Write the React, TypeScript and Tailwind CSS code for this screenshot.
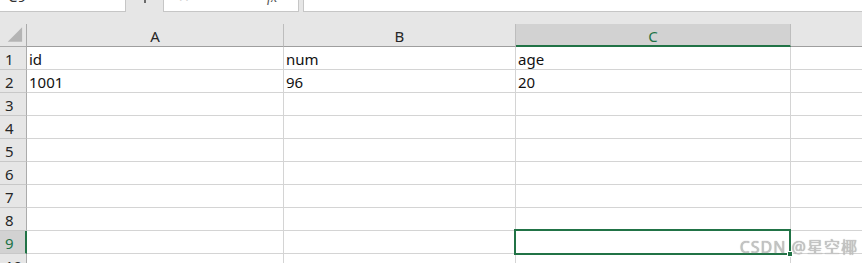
import React from "react";

const cols = [
  { key: "A", w: "w-[257px]" },
  { key: "B", w: "w-[232px]" },
  { key: "C", w: "w-[275px]" },
];

const data: Record<number, string[]> = {
  1: ["id", "num", "age"],
  2: ["1001", "96", "20"],
};

export default function App() {
  const rows = [1, 2, 3, 4, 5, 6, 7, 8, 9, 10];

  return (
    <div className="relative w-[862px] h-[263px] overflow-hidden bg-white font-['Noto_Sans',sans-serif] text-[#1a1a1a]">
      {/* Formula bar (scrolled, only its bottom edge shows) */}
      <div className="flex h-[12px] bg-[#e6e6e6]">
        <div className="w-[126px] h-[12px] overflow-hidden bg-white border-b border-r border-[#c6c6c6] pl-[8px]">
          <div className="-mt-[11px] text-[15px] leading-[15px] text-[#333]">C9</div>
        </div>
        <div className="w-[37px] flex justify-center">
          <div className="w-[2px] h-[3px] bg-[#6b6b6b]" />
        </div>
        <div className="w-[136px] h-[12px] overflow-hidden bg-white border-b border-l border-r border-[#c6c6c6] flex items-start">
          <div className="ml-[14px] -mt-[10px] text-[14px] leading-[14px] text-[#c8c8c8]">✕</div>
          <div className="ml-[34px] -mt-[11px] text-[14px] leading-[14px] text-[#c8c8c8]">✓</div>
          <div className="ml-[31px] -mt-[9px] text-[14px] leading-[14px] italic font-['Liberation_Serif',serif] text-[#555]">fx</div>
        </div>
        <div className="w-[4px]" />
        <div className="flex-1 h-[12px] bg-white border-b border-l border-[#c6c6c6]" />
      </div>
      <div className="h-[12px] bg-[#e6e6e6]" />

      {/* Column headers */}
      <div className="flex h-[23px] bg-[#e6e6e6]">
        <div className="w-[27px] h-[23px] border-r border-b border-[#ababab] flex items-end justify-end">
          <svg width="27" height="23" viewBox="0 0 27 23">
            <polygon points="8,19 23,19 23,4" fill="#b4b4b4" />
          </svg>
        </div>
        {cols.map((c) =>
          c.key === "C" ? (
            <div
              key={c.key}
              className={`${c.w} h-[23px] bg-[#d2d2d2] border-r border-[#bdbdbd] border-b-2 border-b-[#217346] text-center text-[15px] leading-[25px] text-[#217346]`}
            >
              {c.key}
            </div>
          ) : (
            <div
              key={c.key}
              className={`${c.w} h-[23px] border-r border-[#bdbdbd] border-b border-b-[#9e9e9e] text-center text-[15px] leading-[25px] text-[#262626]`}
            >
              {c.key}
            </div>
          )
        )}
        <div className="flex-1 h-[23px] border-b border-[#9e9e9e]" />
      </div>

      {/* Rows */}
      {rows.map((r) => {
        const selected = r === 9;
        const vals = data[r] || ["", "", ""];
        return (
          <div key={r} className="flex h-[23px]">
            <div
              className={
                selected
                  ? "w-[27px] h-[23px] bg-[#d2d2d2] border-r-2 border-r-[#217346] border-b border-b-[#c8c8c8] pl-[5px] text-[15px] leading-[25px] text-[#217346]"
                  : "w-[27px] h-[23px] bg-[#e6e6e6] border-r border-r-[#ababab] border-b border-b-[#c8c8c8] pl-[5px] text-[15px] leading-[25px] text-[#262626]"
              }
            >
              {r}
            </div>
            {cols.map((c, i) => (
              <div
                key={c.key}
                className={`${c.w} h-[23px] border-r border-b border-[#d4d4d4] pl-[2px] text-[15px] leading-[25px] text-[#111] whitespace-nowrap`}
              >
                {vals[i]}
              </div>
            ))}
            <div className="flex-1 h-[23px] border-b border-[#d4d4d4]" />
          </div>
        );
      })}

      {/* Active cell C9 */}
      <div className="absolute left-[514px] top-[229px] w-[277px] h-[26px] border-2 border-[#217346]" />
      <div className="absolute left-[787px] top-[251px] w-[6px] h-[6px] bg-[#217346] border border-white" />

      {/* Watermark */}
      <div className="absolute right-[4px] top-[237px] text-[16px] leading-[20px] text-[#c4c4c4] tracking-[1px] whitespace-nowrap font-['Noto_Sans','Noto_Sans_CJK_SC',sans-serif] [text-shadow:0_0_1px_#9a9a9a]">
        CSDN @星空椰
      </div>
    </div>
  );
}
